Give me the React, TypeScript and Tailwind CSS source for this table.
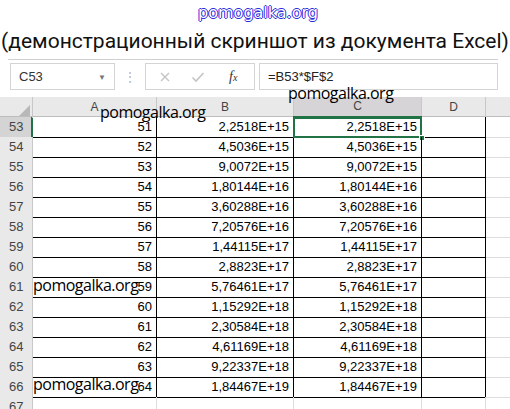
import React from "react";

const rows: [number, string, string][] = [
    [53, "51", "2,2518E+15"],
    [54, "52", "4,5036E+15"],
    [55, "53", "9,0072E+15"],
    [56, "54", "1,80144E+16"],
    [57, "55", "3,60288E+16"],
    [58, "56", "7,20576E+16"],
    [59, "57", "1,44115E+17"],
    [60, "58", "2,8823E+17"],
    [61, "59", "5,76461E+17"],
    [62, "60", "1,15292E+18"],
    [63, "61", "2,30584E+18"],
    [64, "62", "4,61169E+18"],
    [65, "63", "9,22337E+18"],
    [66, "64", "1,84467E+19"]
];

const cellFont = { fontFamily: '"Liberation Sans", Arial, sans-serif' };
const markFont = { fontFamily: '"Open Sans", "Liberation Sans", sans-serif' };

function Watermark({ className }: { className: string }) {
    return (
        <div
            className={"absolute text-[16px] leading-none tracking-[-0.5px] text-black " + className}
            style={markFont}
        >
            pomogalka.org
        </div>
    );
}

function FormulaBar() {
    return (
        <div className="flex items-center h-[37px] pt-[3px] pb-[7px] bg-white">
            <div className="ml-[10px] w-[105px] h-[27px] border border-[#d4d4d4] flex items-center justify-between px-[8px]">
                <span className="text-[13px] text-[#333]" style={cellFont}>
                    C53
                </span>
                <span className="text-[8px] text-[#777]">▼</span>
            </div>
            <div className="w-[30px] flex justify-center text-[#b0b0b0] text-[12px] leading-none">⋮</div>
            <div className="w-[110px] h-[27px] border border-[#d4d4d4] flex items-center">
                <svg width="12" height="12" viewBox="0 0 12 12" className="ml-[13px]">
                    <path d="M2 2 L10 10 M10 2 L2 10" stroke="#c4c4c4" strokeWidth="1.4" />
                </svg>
                <svg width="14" height="12" viewBox="0 0 14 12" className="ml-[20px]">
                    <path d="M1.5 6.5 L5 10 L12.5 2" stroke="#c4c4c4" strokeWidth="1.6" fill="none" />
                </svg>
                <span
                    className="ml-[24px] italic text-[14px] text-[#333]"
                    style={{ fontFamily: '"Liberation Serif", serif' }}
                >
                    f<span className="text-[10px]">x</span>
                </span>
            </div>
            <div className="ml-[4px] w-[239px] h-[27px] border border-[#d4d4d4] flex items-center px-[8px]">
                <span className="text-[13px] text-[#222]" style={cellFont}>
                    =B53*$F$2
                </span>
            </div>
        </div>
    );
}

function HeaderRow() {
    return (
        <div className="grid grid-cols-[33px_124px_137px_128px_64px_1fr] h-[20px] bg-[#e9e9e9] border-b border-[#bdbdbd] text-[12px] text-[#444]" style={cellFont}>
            <div className="relative border-r border-[#c8c8c8]">
                <svg width="11" height="11" viewBox="0 0 11 11" className="absolute right-[2px] bottom-[2px]">
                    <path d="M11 0 L11 11 L0 11 Z" fill="#b8b8b8" />
                </svg>
            </div>
            <div className="flex items-end justify-center pb-[2px] border-r border-[#c8c8c8]">A</div>
            <div className="flex items-end justify-center pb-[2px] border-r border-[#c8c8c8]">B</div>
            <div className="flex items-end justify-center pb-[2px] border-r border-[#c8c8c8] bg-[#d6d4d6] border-b-2 border-b-[#217346] -mb-px">C</div>
            <div className="flex items-end justify-center pb-[2px] border-r border-[#c8c8c8]">D</div>
            <div />
        </div>
    );
}

function DataRow({ n, a, v, first }: { n: number; a: string; v: string; first: boolean }) {
    const cell = "flex items-center justify-end pr-[4px] border-r border-b border-black";
    return (
        <div className="grid grid-cols-[33px_124px_137px_128px_64px_1fr] h-[20px] text-[13px] text-black" style={cellFont}>
            <div
                className={
                    "flex items-center pl-[9px] text-[13px] text-[#444] border-b border-[#dedede] " +
                    (first ? "bg-[#d4d4d4] border-r-2 border-r-[#217346]" : "bg-[#e9e9e9] border-r border-r-[#c8c8c8]")
                }
            >
                {n}
            </div>
            <div className={cell}>{a}</div>
            <div className={cell}>{v}</div>
            <div className={"relative " + cell}>
                {v}
                {first && (
                    <>
                        <div className="absolute -left-px -top-px right-[-1px] bottom-[-1px] border-2 border-[#217346]" />
                        <div className="absolute right-[-4px] bottom-[-4px] w-[6px] h-[6px] bg-[#217346] border border-white" />
                    </>
                )}
            </div>
            <div className="border-r border-b border-black" />
            <div className="border-b border-[#dedede]" />
        </div>
    );
}

function EmptyRow({ n }: { n: number }) {
    const cell = "border-r border-b border-[#dedede]";
    return (
        <div className="grid grid-cols-[33px_124px_137px_128px_64px_1fr] h-[20px] text-[13px]" style={cellFont}>
            <div className="flex items-center pl-[9px] text-[#444] bg-[#e9e9e9] border-r border-[#c8c8c8]">{n}</div>
            <div className={cell} />
            <div className={cell} />
            <div className={cell} />
            <div className={cell} />
            <div />
        </div>
    );
}

export default function App() {
    return (
        <div className="relative w-[510px] h-[409px] overflow-hidden bg-white">
            <div className="h-[26px] flex items-start justify-center pt-[3px]">
                <span
                    className="ml-[6px] text-[16px] leading-[20px]"
                    style={{
                        fontFamily: '"DejaVu Sans", Verdana, sans-serif',
                        color: "white",
                        textShadow:
                            "1px 0 0 #2a2ae0, -1px 0 0 #2a2ae0, 0 1px 0 #2a2ae0, 0 -1px 0 #2a2ae0"
                    }}
                >
                    pomogalka.org
                </span>
            </div>
            <div
                className="h-[33px] text-center text-[21px] leading-[30px] text-[#111] whitespace-nowrap"
                style={{ fontFamily: 'Roboto, "Noto Sans", sans-serif' }}
            >
                (демонстрационный скриншот из документа Excel)
            </div>
            <div className="mx-[8px] w-[490px] h-px bg-[#d0d0d0]" />
            <FormulaBar />
            <HeaderRow />
            {rows.map(([n, a, v], i) => (
                <DataRow key={n} n={n} a={a} v={v} first={i === 0} />
            ))}
            <EmptyRow n={67} />

            <Watermark className="left-[100px] top-[104px]" />
            <Watermark className="left-[288px] top-[85px]" />
            <Watermark className="left-[33px] top-[277px]" />
            <Watermark className="left-[33px] top-[376px]" />
        </div>
    );
}
